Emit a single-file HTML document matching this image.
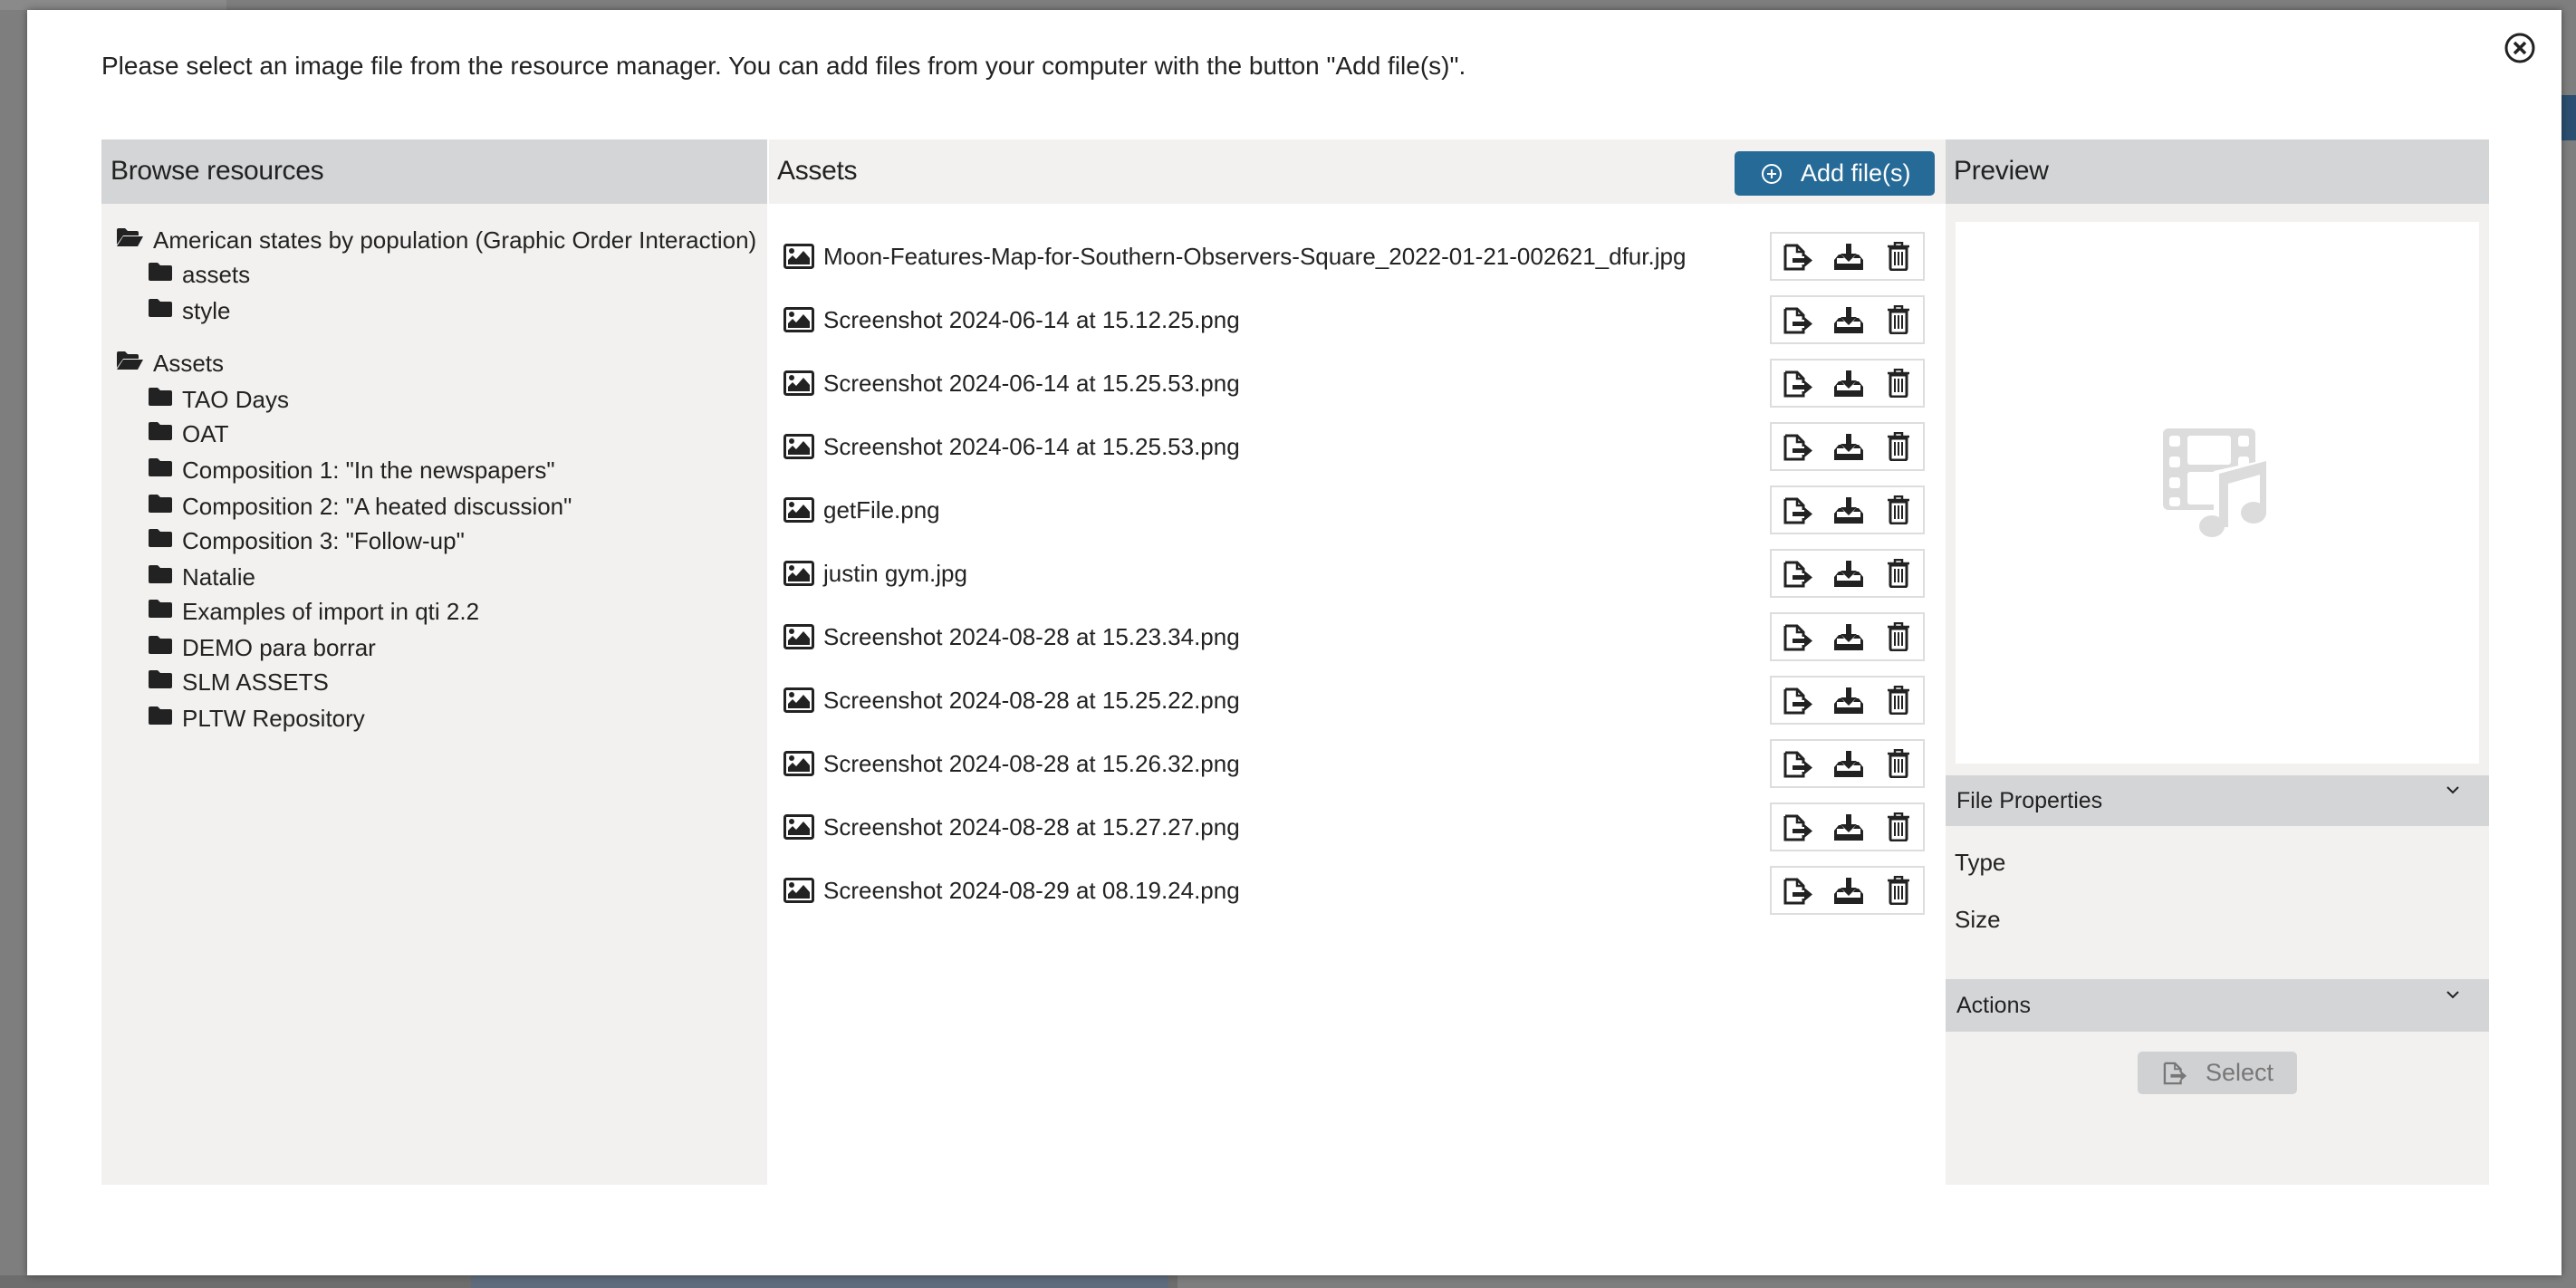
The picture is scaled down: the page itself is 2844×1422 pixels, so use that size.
<!DOCTYPE html>
<html><head><meta charset="utf-8">
<style>
*{margin:0;padding:0;box-sizing:border-box}
body{width:2844px;height:1422px;overflow:hidden;background:#7e7e7e;font-family:"Liberation Sans",sans-serif;color:#222;position:relative}
.a{position:absolute}
.modal{left:30px;top:11px;width:2798px;height:1397px;background:#fff;box-shadow:0 0 8px rgba(0,0,0,.4)}
.t{position:absolute;white-space:nowrap;font-size:26px;letter-spacing:0;line-height:30px}
.h{font-size:30px;letter-spacing:-0.3px}
.box{position:absolute;left:1954px;width:171px;height:54px;border:2px solid #ddd;background:#fff}
</style></head><body>
<div class="a" style="left:0;top:0;width:250px;height:11px;background:#8a8a8a"></div>
<div class="a" style="left:0;top:1408px;width:1300px;height:14px;background:#6d6d6d"></div>
<div class="a" style="left:520px;top:1408px;width:770px;height:14px;background:#5e6c7d"></div>
<div class="a" style="left:2828px;top:105px;width:16px;height:50px;background:#2a4f70"></div>
<div class="a modal"></div>

<div class="t" style="left:112px;top:58px;font-size:28px">Please select an image file from the resource manager. You can add files from your computer with the button "Add file(s)".</div>
<svg class="a" style="left:2764px;top:35px" width="36" height="36" viewBox="0 0 36 36"><circle cx="18" cy="18" r="15" fill="none" stroke="#222" stroke-width="3"/><path d="M12 12L24 24M24 12L12 24" stroke="#222" stroke-width="3.5"/></svg>

<div class="a" style="left:112px;top:154px;width:735px;height:71px;background:#d4d5d7"></div>
<div class="a" style="left:112px;top:225px;width:735px;height:1083px;background:#f2f1ef"></div>
<div class="t h" style="left:122px;top:174px">Browse resources</div>

<div class="a" style="left:849px;top:154px;width:1299px;height:71px;background:#f2f1ef"></div>
<div class="t h" style="left:858px;top:174px">Assets</div>
<div class="a" style="left:1915px;top:167px;width:221px;height:49px;background:#266b97;border-radius:5px"></div>
<svg class="a" style="left:1944px;top:180px" width="24" height="24" viewBox="0 0 24 24"><circle cx="12" cy="12" r="10" fill="none" stroke="#fff" stroke-width="2"/><path d="M12 7v10M7 12h10" stroke="#fff" stroke-width="2"/></svg>
<div class="t" style="left:1988px;top:176px;color:#fff;font-size:27px">Add file(s)</div>

<div class="a" style="left:2148px;top:154px;width:600px;height:71px;background:#d4d5d7"></div>
<div class="a" style="left:2148px;top:225px;width:600px;height:1083px;background:#f2f1ef"></div>
<div class="t h" style="left:2157px;top:174px">Preview</div>
<div class="a" style="left:2159px;top:245px;width:578px;height:598px;background:#fff"></div>
<svg class="a" style="left:2370px;top:460px" width="150" height="140" viewBox="0 0 150 140">
<rect x="18" y="13" width="102" height="90" rx="6" fill="#dcdcdc"/>
<g fill="#fff"><rect x="25" y="21" width="12" height="12" rx="3"/><rect x="25" y="44" width="12" height="12" rx="3"/><rect x="25" y="67" width="12" height="12" rx="3"/><rect x="25" y="89" width="12" height="10" rx="3"/>
<rect x="101" y="21" width="12" height="12" rx="3"/><rect x="101" y="44" width="12" height="12" rx="3"/>
<rect x="45" y="21" width="48" height="32" rx="3"/><rect x="45" y="61" width="40" height="36" rx="3"/>
<path d="M74 60L138 46V120H74Z"/></g>
<g fill="#dcdcdc"><path d="M80 63L132 49V108H125V64L90 74V122H80Z"/><ellipse cx="72" cy="121" rx="14" ry="12"/><ellipse cx="118" cy="106" rx="14" ry="12"/></g>
</svg>
<div class="a" style="left:2148px;top:856px;width:600px;height:56px;background:#d4d5d7"></div>
<div class="t" style="left:2160px;top:869px;font-size:25px">File Properties</div>
<svg class="a" style="left:2700px;top:866px" width="16" height="12" viewBox="0 0 16 12"><path d="M2 3l6 6 6-6" fill="none" stroke="#222" stroke-width="2"/></svg>
<div class="t" style="left:2158px;top:937px">Type</div>
<div class="t" style="left:2158px;top:1000px">Size</div>
<div class="a" style="left:2148px;top:1081px;width:600px;height:58px;background:#d4d5d7"></div>
<div class="t" style="left:2160px;top:1095px;font-size:25px">Actions</div>
<svg class="a" style="left:2700px;top:1092px" width="16" height="12" viewBox="0 0 16 12"><path d="M2 3l6 6 6-6" fill="none" stroke="#222" stroke-width="2"/></svg>
<div class="a" style="left:2360px;top:1161px;width:176px;height:47px;background:#d0d1d3;border-radius:5px"></div>
<svg class="a" style="left:2387px;top:1172px" width="30" height="26" viewBox="0 0 32 28"><path d="M3 2h12l7 7v4M22 22v4H3V2" fill="none" stroke="#777" stroke-width="2.5"/><path d="M15 2v7h7" fill="none" stroke="#777" stroke-width="2"/><path d="M10 15h12v-4l7 6-7 6v-4H10z" fill="#777"/></svg>
<div class="t" style="left:2435px;top:1169px;color:#777;font-size:27px">Select</div>

<svg width="0" height="0" style="position:absolute"><defs>
<symbol id="fo" viewBox="0 0 30 22"><path d="M1 3a2 2 0 0 1 2-2h7l3 3h10a2 2 0 0 1 2 2v3H8L1 19Z" fill="#222"/><path d="M8 10h22l-6 11H1Z" fill="#222"/></symbol>
<symbol id="fc" viewBox="0 0 28 22"><path d="M1 3a2 2 0 0 1 2-2h8l3 3h11a2 2 0 0 1 2 2v13a2 2 0 0 1-2 2H3a2 2 0 0 1-2-2Z" fill="#222"/></symbol>
<symbol id="im" viewBox="0 0 34 28"><rect x="1.5" y="1.5" width="31" height="25" rx="2" fill="#fff" stroke="#222" stroke-width="3"/><circle cx="9" cy="8" r="3" fill="#222"/><path d="M5 23v-5l5-5 4 4 8-9 7 8v7z" fill="#222"/></symbol>
<symbol id="fe" viewBox="0 0 34 30"><path d="M3 2h13l7 7v5M23 23v5H3V2" fill="none" stroke="#222" stroke-width="3"/><path d="M16 2v7h7" fill="none" stroke="#222" stroke-width="2.5"/><path d="M11 16h13v-5l9 7.5-9 7.5v-5H11z" fill="#222"/></symbol>
<symbol id="dl" viewBox="0 0 34 30"><path d="M14 0h6v11h6l-9 9-9-9h6z" fill="#222"/><path d="M1 18l5-6h3l3 4H4v6h26v-6h-8l3-4h3l5 6v11H1z" fill="#222"/></symbol>
<symbol id="tr" viewBox="0 0 26 32"><path d="M9 4V1h8v3M1 5h24" fill="none" stroke="#222" stroke-width="2.5"/><path d="M4 7h18v22a2 2 0 0 1-2 2H6a2 2 0 0 1-2-2z" fill="none" stroke="#222" stroke-width="3"/><path d="M9 11v15M13 11v15M17 11v15" stroke="#222" stroke-width="2"/></symbol>
</defs></svg>

<svg class="a" style="left:128px;top:251px" width="30" height="22"><use href="#fo"/></svg>
<div class="t" style="left:169px;top:250px">American states by population (Graphic Order Interaction)</div>
<svg class="a" style="left:163px;top:289px" width="28" height="22"><use href="#fc"/></svg>
<div class="t" style="left:201px;top:288px">assets</div>
<svg class="a" style="left:163px;top:329px" width="28" height="22"><use href="#fc"/></svg>
<div class="t" style="left:201px;top:328px">style</div>
<svg class="a" style="left:128px;top:387px" width="30" height="22"><use href="#fo"/></svg>
<div class="t" style="left:169px;top:386px">Assets</div>

<svg class="a" style="left:163px;top:427px" width="28" height="22"><use href="#fc"/></svg><div class="t" style="left:201px;top:426px">TAO Days</div>
<svg class="a" style="left:163px;top:465px" width="28" height="22"><use href="#fc"/></svg><div class="t" style="left:201px;top:464px">OAT</div>
<svg class="a" style="left:163px;top:505px" width="28" height="22"><use href="#fc"/></svg><div class="t" style="left:201px;top:504px">Composition 1: "In the newspapers"</div>
<svg class="a" style="left:163px;top:545px" width="28" height="22"><use href="#fc"/></svg><div class="t" style="left:201px;top:544px">Composition 2: "A heated discussion"</div>
<svg class="a" style="left:163px;top:583px" width="28" height="22"><use href="#fc"/></svg><div class="t" style="left:201px;top:582px">Composition 3: "Follow-up"</div>
<svg class="a" style="left:163px;top:623px" width="28" height="22"><use href="#fc"/></svg><div class="t" style="left:201px;top:622px">Natalie</div>
<svg class="a" style="left:163px;top:661px" width="28" height="22"><use href="#fc"/></svg><div class="t" style="left:201px;top:660px">Examples of import in qti 2.2</div>
<svg class="a" style="left:163px;top:701px" width="28" height="22"><use href="#fc"/></svg><div class="t" style="left:201px;top:700px">DEMO para borrar</div>
<svg class="a" style="left:163px;top:739px" width="28" height="22"><use href="#fc"/></svg><div class="t" style="left:201px;top:738px">SLM ASSETS</div>
<svg class="a" style="left:163px;top:779px" width="28" height="22"><use href="#fc"/></svg><div class="t" style="left:201px;top:778px">PLTW Repository</div>

<div id="rows"></div>
<script>
var names=["Moon-Features-Map-for-Southern-Observers-Square_2022-01-21-002621_dfur.jpg","Screenshot 2024-06-14 at 15.12.25.png","Screenshot 2024-06-14 at 15.25.53.png","Screenshot 2024-06-14 at 15.25.53.png","getFile.png","justin gym.jpg","Screenshot 2024-08-28 at 15.23.34.png","Screenshot 2024-08-28 at 15.25.22.png","Screenshot 2024-08-28 at 15.26.32.png","Screenshot 2024-08-28 at 15.27.27.png","Screenshot 2024-08-29 at 08.19.24.png"];
var h="";
names.forEach(function(n,i){var c=283+i*70;
h+='<svg class="a" style="left:865px;top:'+(c-14)+'px" width="34" height="28"><use href="#im"/></svg>';
h+='<div class="t" style="left:909px;top:'+(c-15)+'px">'+n+'</div>';
h+='<div class="box" style="top:'+(c-27)+'px"></div>';
h+='<svg class="a" style="left:1968px;top:'+(c-14)+'px" width="34" height="30"><use href="#fe"/></svg>';
h+='<svg class="a" style="left:2024px;top:'+(c-14)+'px" width="34" height="30"><use href="#dl"/></svg>';
h+='<svg class="a" style="left:2083px;top:'+(c-16)+'px" width="26" height="32"><use href="#tr"/></svg>';
});
document.getElementById("rows").innerHTML=h;
</script>
</body></html>
